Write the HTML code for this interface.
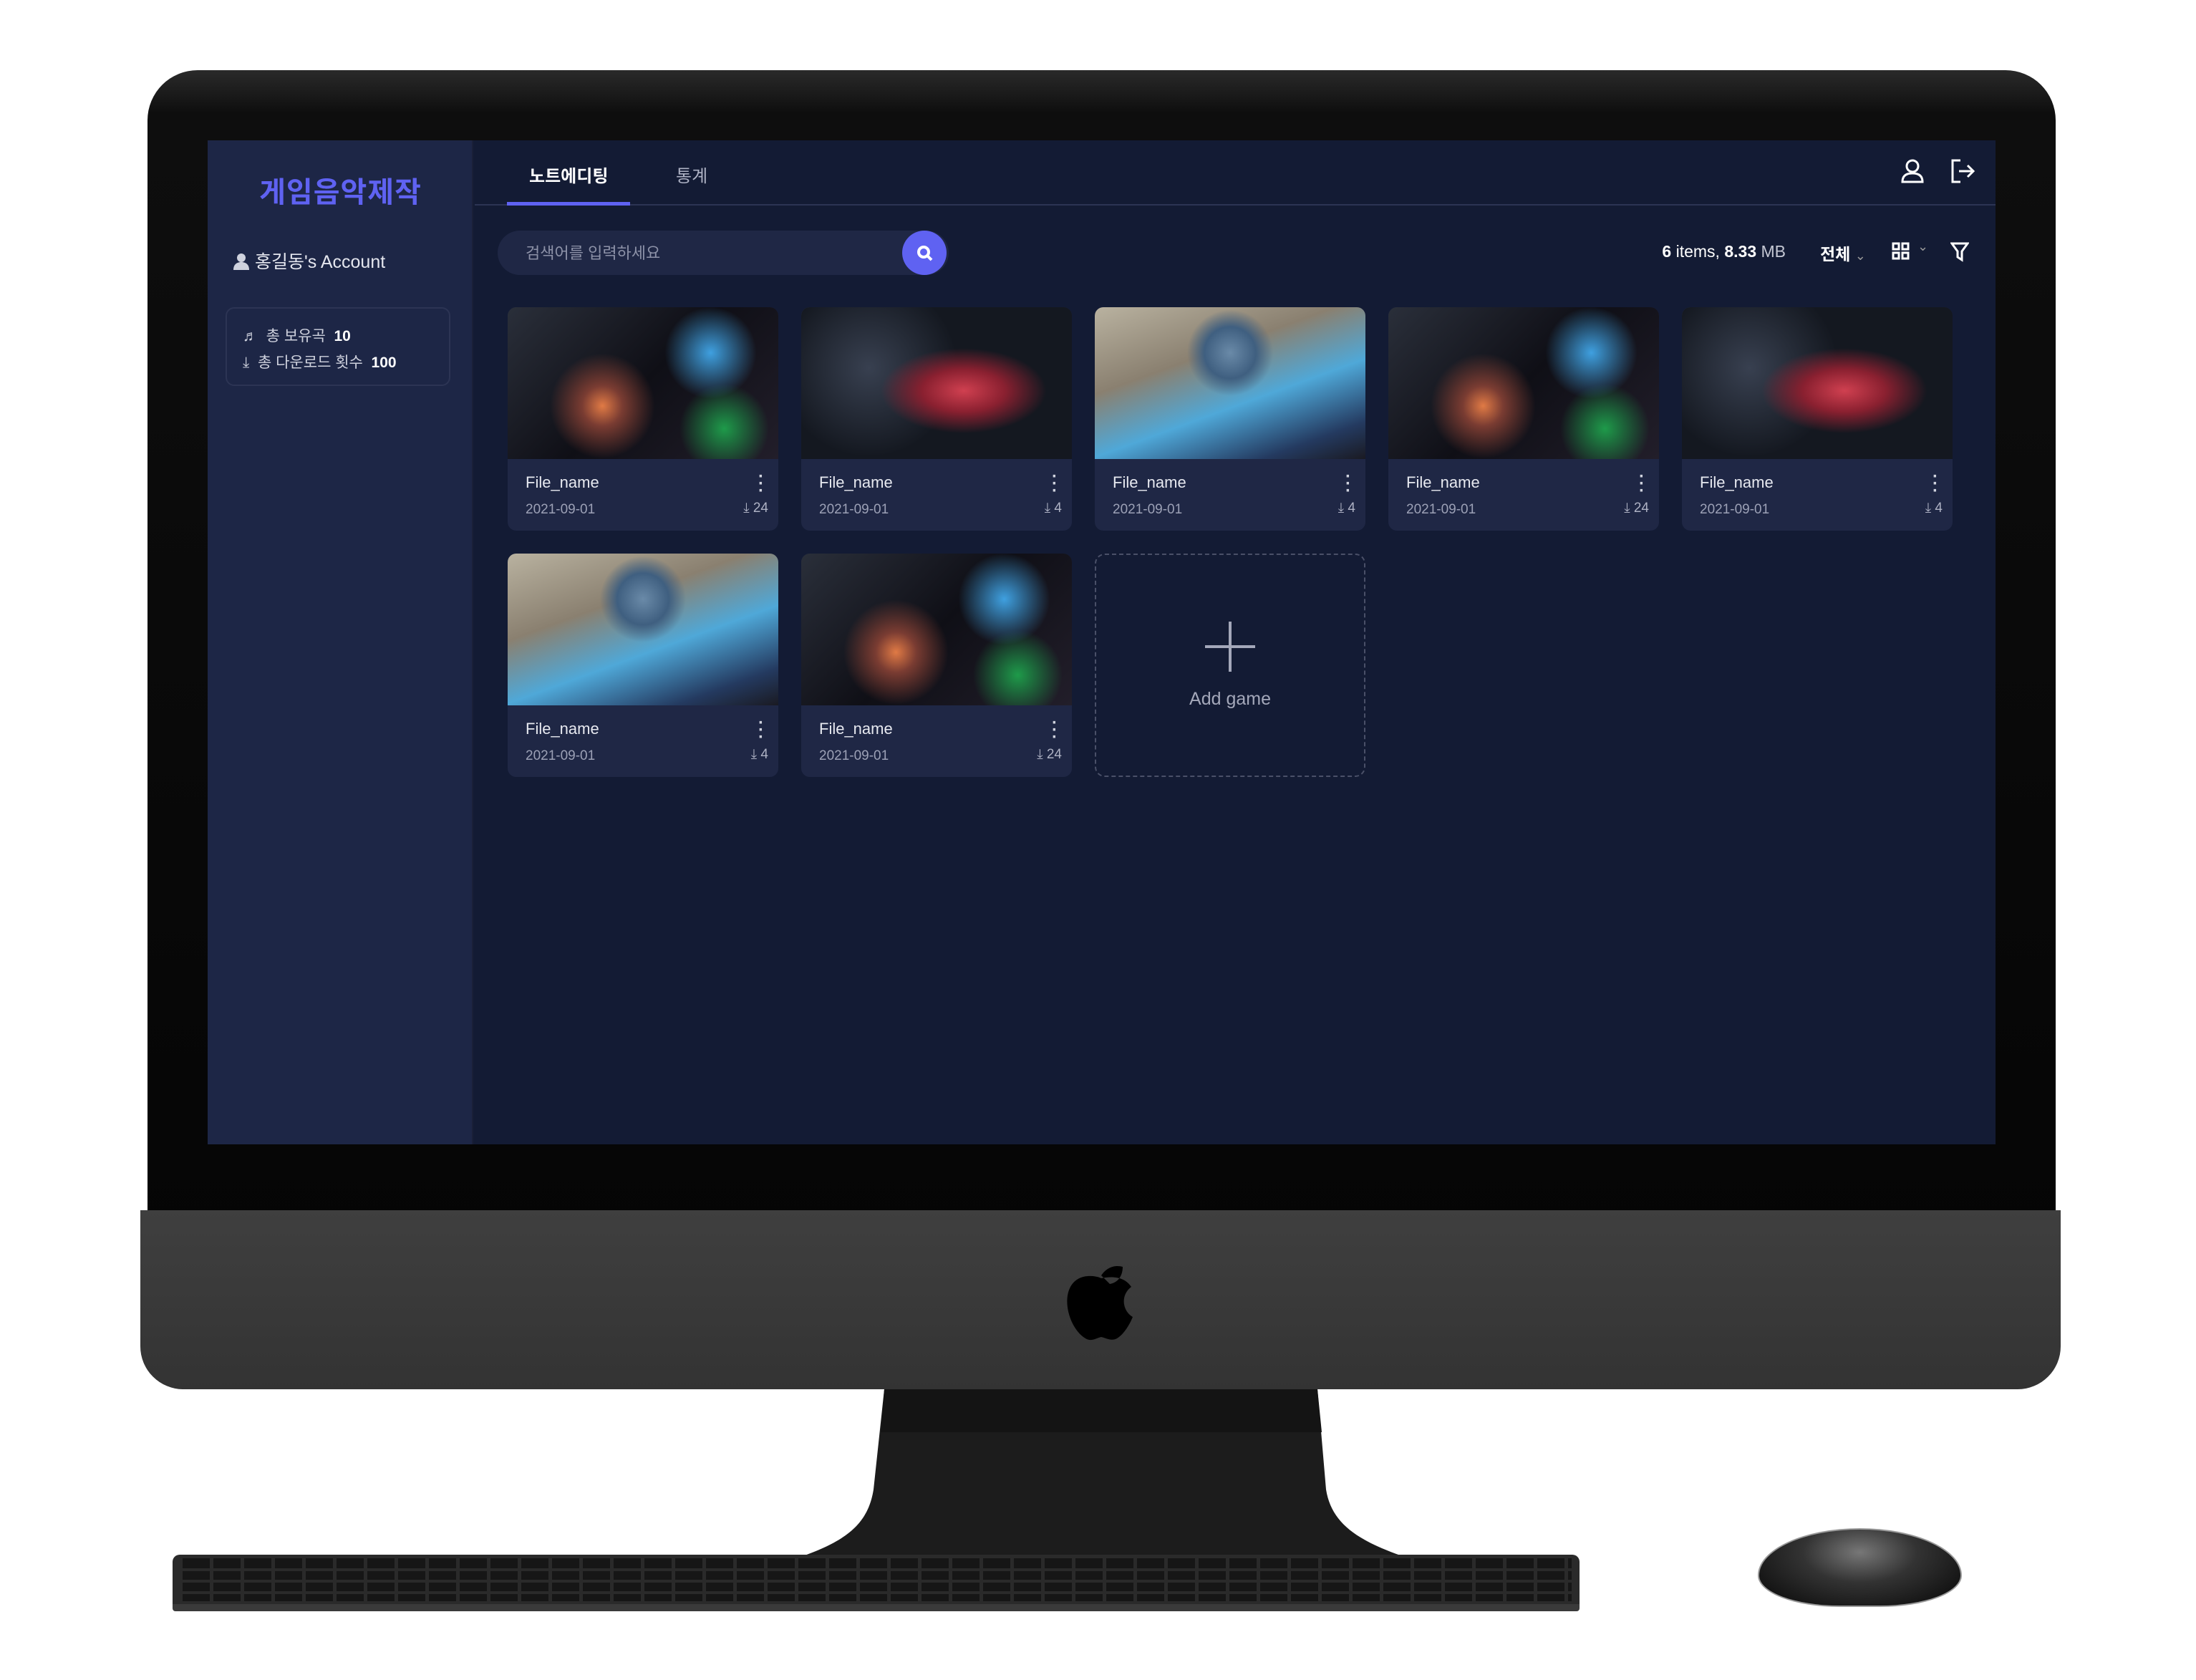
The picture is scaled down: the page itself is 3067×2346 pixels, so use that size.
<!DOCTYPE html>
<html><head><meta charset="utf-8"><style>
*{margin:0;padding:0;box-sizing:border-box}
body{width:3067px;height:2346px;background:#fff;position:relative;overflow:hidden;font-family:"Liberation Sans","Noto Sans CJK KR",sans-serif}
.abs{position:absolute}
.bezel{left:206px;top:98px;width:2665px;height:1640px;background:linear-gradient(180deg,#2a2a2a 0,#0e0e0e 60px,#050505 100%);border-radius:70px 70px 0 0}
.chin{left:196px;top:1690px;width:2682px;height:250px;background:linear-gradient(180deg,#3f3f3f,#383838 60%,#333);border-radius:0 0 60px 60px}
.screen{left:290px;top:196px;width:2497px;height:1402px;background:#131b34}
.side{left:0;top:0;width:371px;height:1402px;background:#1d2646;border-right:2px solid #1a2038}
.logo{left:0;width:371px;top:40px;text-align:center;color:#5f62f2;font-size:40px;font-weight:bold;letter-spacing:1px}
.acct{left:36px;top:150px;color:#e4e6ee;font-size:25px}
.stats{left:25px;top:233px;width:314px;height:110px;border:2px solid #2c3454;border-radius:12px;color:#cfd2de;font-size:21px}
.tab{top:30px;font-size:24px;font-weight:bold}
.card{position:absolute;width:378px;height:312px;background:#1f2745;border-radius:12px;overflow:hidden}
.card .img{height:212px}
.card .fn{position:absolute;left:25px;top:232px;color:#e7e9f0;font-size:22px}
.card .dt{position:absolute;left:25px;top:272px;color:#9ca1b6;font-size:19px}
.card .dots{position:absolute;right:22px;top:232px;color:#d0d3de;font-size:24px;font-weight:bold;line-height:10px;width:6px}
.card .dl{position:absolute;right:14px;top:270px;color:#aeb2c4;font-size:19px;display:flex;gap:4px;align-items:center}
.i1{background:radial-gradient(circle at 35% 65%,#e07a45 0,#7a3c32 10%,transparent 26%),radial-gradient(circle at 75% 30%,#3fa0e0 0,transparent 20%),radial-gradient(circle at 80% 80%,#1e9a4a 0,transparent 18%),linear-gradient(135deg,#2a2f3a,#0f0f16 50%,#221e2a)}
.i2{background:radial-gradient(ellipse at 60% 55%,#d04050 0,#8a2030 18%,transparent 36%),radial-gradient(circle at 25% 40%,#384050 0,#141820 40%),linear-gradient(135deg,#303848,#0c0a12)}
.i3{background:radial-gradient(circle at 50% 30%,#6a8aa8 0,#3f5f80 15%,transparent 25%),linear-gradient(160deg,#b9b2a0 0,#8a8070 35%,#4fa8d8 60%,#243a60 85%,#1a1a22);}
</style></head><body>
<div class="abs bezel"></div>
<div class="abs chin"></div>
<svg class="abs" style="left:1486px;top:1745px" width="104" height="130" viewBox="0 0 104 130"><path d="M52 36c10-14 22-14 30-12 0 12-6 22-18 24zM52 40c-8-4-34-8-44 14-10 22 2 58 22 70 8 5 14 0 22-2 8 2 14 6 22 2 10-6 18-20 22-30-14-8-18-30-2-42-8-12-22-16-42-12z" fill="#000"/></svg>
<svg class="abs" style="left:1100px;top:1940px" width="880" height="240" viewBox="0 0 880 240"><path d="M135 0H740L752 140C760 190 800 215 880 240H0C80 215 112 190 120 140Z" fill="#1c1c1c"/><path d="M135 0H740L746 60H130Z" fill="#141414"/></svg>
<div class="abs" style="left:241px;top:2171px;width:1965px;height:79px;background:#2a2a2a;border-radius:10px 10px 4px 4px;border-bottom:10px solid #3a3a3a"></div>
<div class="abs" style="left:255px;top:2176px;width:1940px;height:60px;background:repeating-linear-gradient(90deg,#141414 0 38px,#2a2a2a 38px 43px),#141414;opacity:.9"></div>
<div class="abs" style="left:255px;top:2190px;width:1940px;height:4px;background:#2a2a2a"></div>
<div class="abs" style="left:255px;top:2206px;width:1940px;height:4px;background:#2a2a2a"></div>
<div class="abs" style="left:255px;top:2222px;width:1940px;height:4px;background:#2a2a2a"></div>
<div class="abs" style="left:2455px;top:2134px;width:285px;height:110px;border-radius:50% 50% 40% 40%/60% 60% 40% 40%;background:radial-gradient(ellipse at 50% 30%,#777 0,#333 40%,#151515 80%);border:2px solid #999"></div>

<div class="abs screen">
  <div class="abs side">
    <div class="abs logo">게임음악제작</div>
    <div class="abs acct"><svg width="22" height="24" viewBox="0 0 22 24" style="vertical-align:-3px;margin-right:8px"><circle cx="11" cy="7" r="6" fill="#cfd2de"/><path d="M0 24c0-8 5-11 11-11s11 3 11 11z" fill="#cfd2de"/></svg>홍길동's Account</div>
    <div class="abs stats">
      <div style="position:absolute;left:22px;top:22px">♬&nbsp; 총 보유곡 &nbsp;<b style="color:#fff">10</b></div>
      <div style="position:absolute;left:22px;top:59px">⤓&nbsp; 총 다운로드 횟수 &nbsp;<b style="color:#fff">100</b></div>
    </div>
  </div>
  <div class="abs tab" style="left:449px;color:#fff">노트에디팅</div>
  <div class="abs tab" style="left:654px;color:#aeb2c4;font-weight:normal">통계</div>
  <div class="abs" style="left:373px;top:89px;width:2124px;height:2px;background:#2c3454"></div>
  <div class="abs" style="left:418px;top:86px;width:172px;height:5px;background:#5f62f2"></div>
  <svg class="abs" style="left:2365px;top:26px" width="32" height="34" viewBox="0 0 32 34" fill="none" stroke="#fff" stroke-width="3"><circle cx="16" cy="10" r="8"/><path d="M2 32c0-9 6-12 14-12s14 3 14 12z"/></svg>
  <svg class="abs" style="left:2434px;top:26px" width="34" height="34" viewBox="0 0 34 34" fill="none" stroke="#fff" stroke-width="3"><path d="M14 2H3v30h11M12 17h20M24 9l8 8-8 8"/></svg>
  <div class="abs" style="left:405px;top:126px;width:630px;height:62px;background:#1f2745;border-radius:31px"></div>
  <div class="abs" style="left:444px;top:140px;color:#8d92a8;font-size:22px">검색어를 입력하세요</div>
  <div class="abs" style="left:970px;top:126px;width:62px;height:62px;border-radius:50%;background:#5f62f2"></div>
  <svg class="abs" style="left:988px;top:144px" width="28" height="28" viewBox="0 0 28 28" fill="none" stroke="#fff" stroke-width="4"><circle cx="12" cy="12" r="7"/><path d="M17 17l6 6"/></svg>
  <div class="abs" style="right:293px;top:142px;color:#fff;font-size:23px;white-space:nowrap"><b>6</b> items, <b>8.33</b> <span style="color:#c5c8d4">MB</span></div>
  <div class="abs" style="left:2252px;top:140px;color:#fff;font-size:23px;font-weight:bold">전체 <span style="color:#999;font-weight:normal;font-size:18px">&#8964;</span></div>
  <svg class="abs" style="left:2352px;top:142px" width="26" height="26" viewBox="0 0 26 26" fill="none" stroke="#fff" stroke-width="3"><rect x="2" y="2" width="8" height="8"/><rect x="15" y="2" width="8" height="8"/><rect x="2" y="15" width="8" height="8"/><rect x="15" y="15" width="8" height="8"/></svg>
  <div class="abs" style="left:2388px;top:138px;color:#999;font-size:18px">&#8964;</div>
  <svg class="abs" style="left:2434px;top:142px" width="26" height="28" viewBox="0 0 26 28" fill="none" stroke="#fff" stroke-width="3"><path d="M2 2h22l-8 11v12l-6-4v-8z"/></svg>

  <div class="card" style="left:419px;top:233px"><div class="img i1"></div><div class="fn">File_name</div><div class="dt">2021-09-01</div><div class="dots">·<br>·<br>·</div><div class="dl">⤓ 24</div></div>
  <div class="card" style="left:829px;top:233px"><div class="img i2"></div><div class="fn">File_name</div><div class="dt">2021-09-01</div><div class="dots">·<br>·<br>·</div><div class="dl">⤓ 4</div></div>
  <div class="card" style="left:1239px;top:233px"><div class="img i3"></div><div class="fn">File_name</div><div class="dt">2021-09-01</div><div class="dots">·<br>·<br>·</div><div class="dl">⤓ 4</div></div>
  <div class="card" style="left:1649px;top:233px"><div class="img i1"></div><div class="fn">File_name</div><div class="dt">2021-09-01</div><div class="dots">·<br>·<br>·</div><div class="dl">⤓ 24</div></div>
  <div class="card" style="left:2059px;top:233px"><div class="img i2"></div><div class="fn">File_name</div><div class="dt">2021-09-01</div><div class="dots">·<br>·<br>·</div><div class="dl">⤓ 4</div></div>
  <div class="card" style="left:419px;top:577px"><div class="img i3"></div><div class="fn">File_name</div><div class="dt">2021-09-01</div><div class="dots">·<br>·<br>·</div><div class="dl">⤓ 4</div></div>
  <div class="card" style="left:829px;top:577px"><div class="img i1"></div><div class="fn">File_name</div><div class="dt">2021-09-01</div><div class="dots">·<br>·<br>·</div><div class="dl">⤓ 24</div></div>
  <div class="abs" style="left:1239px;top:577px;width:378px;height:312px;border:2px dashed #4a5068;border-radius:14px"></div>
  <svg class="abs" style="left:1391px;top:670px" width="74" height="74" viewBox="0 0 74 74" stroke="#a4a8ba" stroke-width="4"><path d="M37 2v70M2 37h70"/></svg>
  <div class="abs" style="left:1239px;top:766px;width:378px;text-align:center;color:#a4a8ba;font-size:25px">Add game</div>
</div>
</body></html>
